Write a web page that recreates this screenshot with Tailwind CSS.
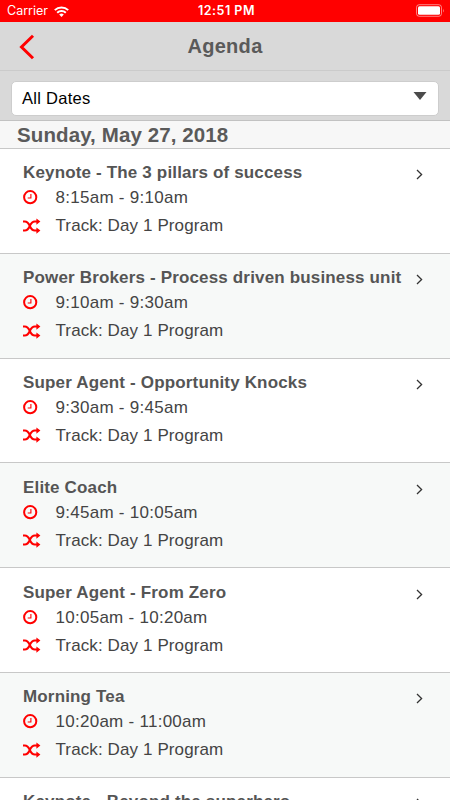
<!DOCTYPE html>
<html lang="en">
<head>
<meta charset="utf-8">
<title>Agenda</title>
<script src="https://cdn.jsdelivr.net/npm/@tailwindcss/browser@4"></script>
</head>
<body class="h-[800px] w-[450px] overflow-hidden bg-white font-['Liberation_Sans',Arial,sans-serif]">
<svg class="hidden">
  <symbol id="clock" viewBox="0 0 15 15"><circle cx="7.2" cy="7.2" r="6.1" fill="none" stroke="#f00" stroke-width="2"/><path d="M7.9 3.9v4.1H4.7" fill="none" stroke="#f00" stroke-width="1.1"/></symbol>
  <symbol id="shuffle" viewBox="0 0 18 16"><path d="M0 3.6h1.8c2.8 0 3.9 2 5 4.4s2.2 4.6 5 4.6H14M0 12.6h1.8c2.8 0 3.9-2.2 5-4.6s2.2-4.4 5-4.4H14" fill="none" stroke="#f00" stroke-width="2"/><path d="M13.4.4 17.4 3.6l-4 3.2zM13.4 9.4l4 3.2-4 3.2z" fill="#f00"/></symbol>
  <symbol id="chevron" viewBox="0 0 7 11"><path d="m1 1 4.6 4.5L1 10" fill="none" stroke="#333" stroke-width="1.3"/></symbol>
</svg>
<div class="flex h-[800px] flex-col overflow-hidden">
  <header class="grid h-[22px] shrink-0 grid-cols-3 items-center bg-[#f00] px-[7px] font-[Inter,sans-serif] text-white">
    <div class="flex items-center gap-[6px] text-[12.5px]"><span class="mt-px">Carrier</span>
      <svg class="h-[11px] w-[15px]" viewBox="0 0 15 11" fill="none" stroke="#fff" stroke-width="2"><path d="M.8 4.1a9.6 9.6 0 0 1 13.4 0M3.2 6.7a6.2 6.2 0 0 1 8.6 0"/><path d="M5.2 8.6a3.3 3.3 0 0 1 4.6 0L7.5 11z" fill="#fff" stroke="none"/></svg>
    </div>
    <div class="mt-px pl-[3px] text-center text-[12.5px] font-semibold tracking-[0.5px] whitespace-nowrap">12:51 PM</div>
    <svg class="-mt-px -mr-[2px] h-[13px] w-[30px] justify-self-end" viewBox="0 0 30 13"><rect x="1.5" y=".7" width="25" height="11.6" rx="2.7" fill="none" stroke="#fff" stroke-opacity=".5"/><rect x="3" y="2.2" width="22" height="8.6" rx="1.5" fill="#fff"/><path d="M28 4.5q1.5 2 0 4z" fill="#fff" fill-opacity=".5"/></svg>
  </header>
  <div class="grid h-[49px] shrink-0 grid-cols-[60px_1fr_60px] items-center border-b border-[#cbcbcb] bg-[#d9d9d9]">
    <svg class="mt-px ml-[19px] h-[26px] w-4" viewBox="0 0 16 26"><path d="M14 1.7 2.5 13 14 24.3" fill="none" stroke="#f00" stroke-width="3"/></svg>
    <h1 class="-mt-px text-center text-[20px] font-bold tracking-[0.3px] text-[#5a5a5a]">Agenda</h1>
  </div>
  <div class="h-[50px] shrink-0 border-b border-[#c2c2c2] bg-[#d9d9d9] px-[11px] pt-[10px]">
    <div class="flex h-[35px] items-center justify-between rounded-[5px] border border-[#cdcdcd] bg-white pr-[11px] pl-[10px] text-[16.5px] tracking-[0.28px] text-black"><span>All Dates</span>
      <svg class="-mt-[6px] h-2 w-[14px]" viewBox="0 0 14 8"><path d="M.5 0h13L7 8z" fill="#4b4b4b"/></svg>
    </div>
  </div>
  <h2 class="flex h-7 shrink-0 items-center border-b border-[#c8c8c8] bg-[#f7f7f7] pt-px pl-[17px] text-[20.5px] font-bold tracking-[0.1px] whitespace-nowrap text-[#5a5a5a]"><span>Sunday, May 27, 2018</span></h2>
  <main id="list"></main>
</div>
<template id="row">
  <article class="flex h-[104.8px] justify-between border-b border-[#c8c8c8] bg-white pt-[12.4px] pr-[27px] pl-[23px] text-[#444]">
    <div class="whitespace-nowrap">
      <h3 class="h-[25px] text-[17px] leading-[24px] font-bold tracking-[0.16px] text-[#555]"></h3>
      <div class="flex h-7 items-center"><svg class="-mt-[5px] mr-[17.5px] h-[15px] w-[15px]"><use href="#clock"/></svg><p class="-mt-[4px] text-[17px] leading-6 tracking-[0.27px]"></p></div>
      <div class="flex h-7 items-center"><svg class="-mt-[5px] mr-[14.5px] h-4 w-[18px]"><use href="#shuffle"/></svg><p class="-mt-[4px] text-[17px] leading-6 tracking-[0.11px]">Track: Day 1 Program</p></div>
    </div>
    <svg class="mt-[8px] h-[11px] w-[7px]"><use href="#chevron"/></svg>
  </article>
</template>
<script>
const sessions = [
  ["Keynote - The 3 pillars of success", "8:15am - 9:10am"],
  ["Power Brokers - Process driven business unit", "9:10am - 9:30am"],
  ["Super Agent - Opportunity Knocks", "9:30am - 9:45am"],
  ["Elite Coach", "9:45am - 10:05am"],
  ["Super Agent - From Zero", "10:05am - 10:20am"],
  ["Morning Tea", "10:20am - 11:00am"],
  ["Keynote - Beyond the superhero", ""]
];
sessions.forEach(([name, time], i) => {
  const row = document.getElementById("row").content.cloneNode(true);
  row.querySelector("h3").textContent = name;
  row.querySelector("p").textContent = time;
  if (i % 2) row.querySelector("article").classList.replace("bg-white", "bg-[#f7f9f8]");
  document.getElementById("list").append(row);
});
</script>
</body>
</html>
